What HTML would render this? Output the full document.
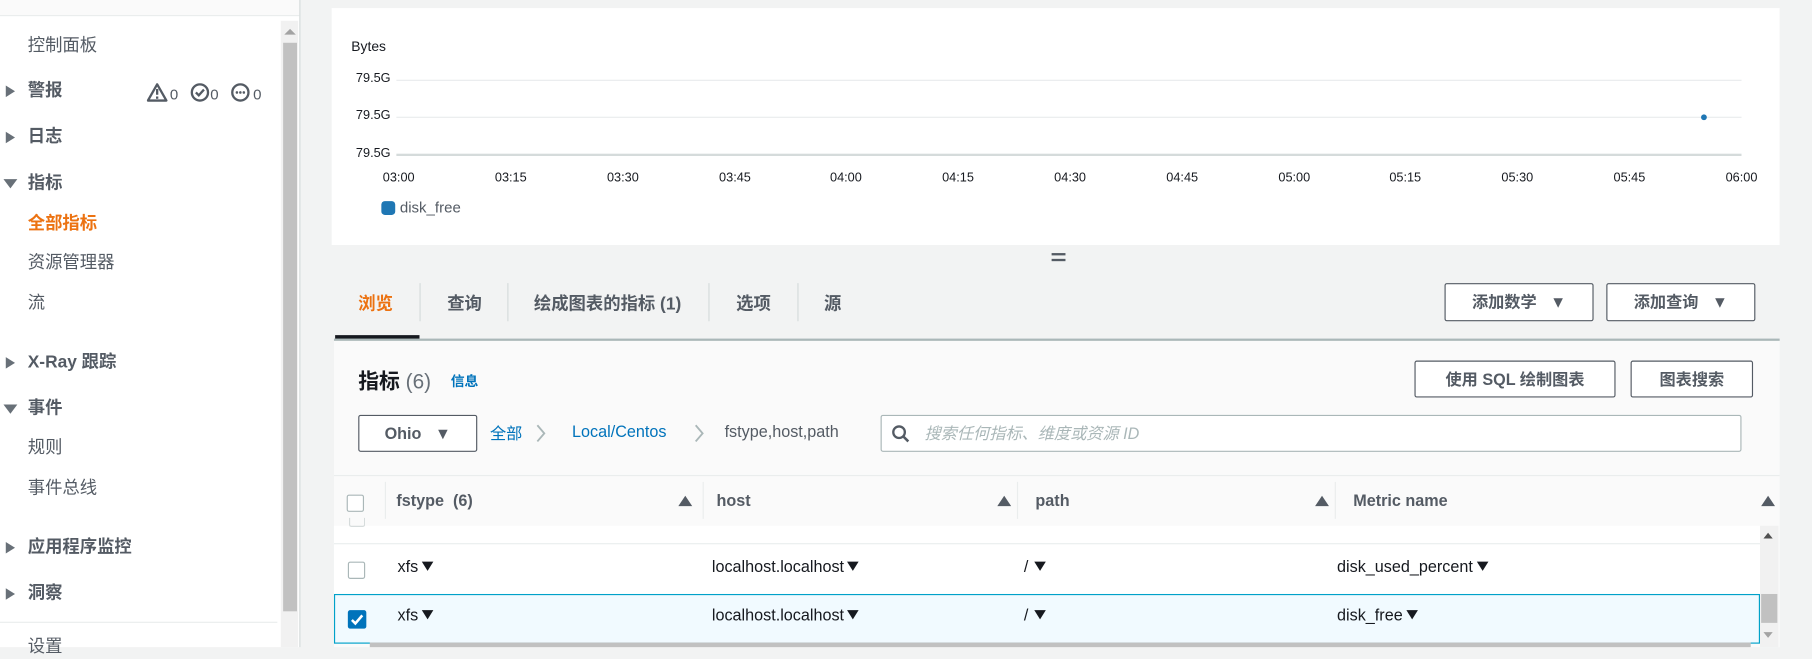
<!DOCTYPE html>
<html><head><meta charset="utf-8"><style>
*{margin:0;padding:0;box-sizing:border-box}
html,body{width:1812px;height:647px;overflow:hidden;background:#f2f3f3}
#w{position:absolute;left:0;top:0;width:1568px;height:560px;transform:scale(1.15561);transform-origin:0 0;font-family:"Liberation Sans","Noto Sans CJK SC",sans-serif;color:#16191f}
.a{position:absolute;white-space:nowrap}
.nav{font-size:15px;color:#545b64;line-height:20px}
.b{font-weight:bold}
.tri{position:absolute;width:0;height:0;border-top:5px solid transparent;border-bottom:5px solid transparent;border-left:8px solid #687078}
.trid{position:absolute;width:0;height:0;border-left:6px solid transparent;border-right:6px solid transparent;border-top:8px solid #687078}
.btn{position:absolute;background:#fff;border:1px solid #545b64;border-radius:2px;font-size:14px;font-weight:bold;color:#545b64;text-align:center}
.yl{position:absolute;font-size:11px;color:#16191f;left:308px}
.xl{position:absolute;font-size:11px;color:#16191f;top:148px;width:40px;margin-left:-20px;text-align:center}
.gl{position:absolute;left:343px;width:1164px;height:1px;background:#e9ebed}
.sep{position:absolute;width:1px;background:#d5dbdb}
.cb{position:absolute;width:15px;height:15px;border:1px solid #aab7b8;border-radius:2px;background:#fff}
.th{position:absolute;font-size:14px;font-weight:bold;color:#545b64;top:425px}
.up{position:absolute;width:0;height:0;border-left:6px solid transparent;border-right:6px solid transparent;border-bottom:9px solid #545b64;top:429px}
.td{position:absolute;font-size:14px;color:#16191f}
.dd{display:inline-block;width:0;height:0;border-left:5px solid transparent;border-right:5px solid transparent;border-top:8px solid #16191f;margin-left:3px;vertical-align:1px}
</style></head><body><div id="w">
<!-- sidebar -->
<div class="a" style="left:0;top:0;width:259px;height:560px;background:#fff"></div>
<div class="a" style="left:0;top:0;width:259px;height:14px;background:#fafafa;border-bottom:1px solid #eaeded"></div>
<div class="a" style="left:259px;top:0;width:1px;height:560px;background:#d5dbdb"></div>
<div class="a" style="left:243px;top:18px;width:15px;height:542px;background:#f1f1f1"></div>
<div class="a" style="left:245px;top:37px;width:12px;height:492px;background:#c1c1c1"></div>
<div class="a" style="left:246px;top:25px;width:0;height:0;border-left:5px solid transparent;border-right:5px solid transparent;border-bottom:5px solid #a3a3a3"></div>
<div class="a nav" style="left:24px;top:30px">控制面板</div>
<div class="tri" style="left:5px;top:74px"></div><div class="a nav b" style="left:24px;top:69px">警报</div>
<svg class="a" style="left:127px;top:71px" width="104" height="18" viewBox="0 0 104 18">
<path d="M9 2 L17 16 L1 16 Z" fill="none" stroke="#545b64" stroke-width="2" stroke-linejoin="round"/><rect x="8" y="6" width="2" height="5" fill="#545b64"/><rect x="8" y="12.5" width="2" height="2" fill="#545b64"/>
<text x="20" y="15" font-size="13" fill="#545b64" font-family="Liberation Sans">0</text>
<circle cx="46" cy="9" r="7" fill="none" stroke="#545b64" stroke-width="2"/><path d="M42.5 9 L45 11.5 L49.5 6.5" fill="none" stroke="#545b64" stroke-width="2"/>
<text x="55" y="15" font-size="13" fill="#545b64" font-family="Liberation Sans">0</text>
<circle cx="81" cy="9" r="7" fill="none" stroke="#545b64" stroke-width="2"/><circle cx="78" cy="9" r="1.1" fill="#545b64"/><circle cx="81" cy="9" r="1.1" fill="#545b64"/><circle cx="84" cy="9" r="1.1" fill="#545b64"/>
<text x="92" y="15" font-size="13" fill="#545b64" font-family="Liberation Sans">0</text></svg>
<div class="tri" style="left:5px;top:114px"></div><div class="a nav b" style="left:24px;top:109px">日志</div>
<div class="trid" style="left:3px;top:155px"></div><div class="a nav b" style="left:24px;top:149px">指标</div>
<div class="a nav b" style="left:24px;top:184px;color:#ec7211">全部指标</div>
<div class="a nav" style="left:24px;top:218px">资源管理器</div>
<div class="a nav" style="left:24px;top:253px">流</div>
<div class="tri" style="left:5px;top:309px"></div><div class="a nav b" style="left:24px;top:304px">X-Ray 跟踪</div>
<div class="trid" style="left:3px;top:350px"></div><div class="a nav b" style="left:24px;top:344px">事件</div>
<div class="a nav" style="left:24px;top:378px">规则</div>
<div class="a nav" style="left:24px;top:413px">事件总线</div>
<div class="tri" style="left:5px;top:469px"></div><div class="a nav b" style="left:24px;top:464px">应用程序监控</div>
<div class="tri" style="left:5px;top:509px"></div><div class="a nav b" style="left:24px;top:504px">洞察</div>
<div class="a" style="left:0;top:538px;width:240px;height:1px;background:#eaeded"></div>
<div class="a nav" style="left:24px;top:550px">设置</div>
<!-- chart card -->
<div class="a" style="left:287px;top:7px;width:1253px;height:205px;background:#fff"></div>
<div class="a" style="left:304px;top:33px;font-size:12px">Bytes</div>
<div class="gl" style="top:69px"></div><div class="gl" style="top:101px"></div>
<div class="a" style="left:343px;top:133px;width:1164px;height:2px;background:#d5dbdb"></div>
<div class="yl" style="top:62px">79.5G</div><div class="yl" style="top:94px">79.5G</div><div class="yl" style="top:127px">79.5G</div>
<div class="a" style="left:1472px;top:99px;width:5px;height:5px;border-radius:50%;background:#1f77b4"></div>
<div class="xl" style="left:345px">03:00</div><div class="xl" style="left:442px">03:15</div><div class="xl" style="left:539px">03:30</div><div class="xl" style="left:636px">03:45</div><div class="xl" style="left:732px">04:00</div><div class="xl" style="left:829px">04:15</div><div class="xl" style="left:926px">04:30</div><div class="xl" style="left:1023px">04:45</div><div class="xl" style="left:1120px">05:00</div><div class="xl" style="left:1216px">05:15</div><div class="xl" style="left:1313px">05:30</div><div class="xl" style="left:1410px">05:45</div><div class="xl" style="left:1507px">06:00</div>
<div class="a" style="left:330px;top:174px;width:12px;height:12px;border-radius:3px;background:#1f77b4"></div>
<div class="a" style="left:346px;top:172px;font-size:13px;color:#545b64">disk_free</div>
<div class="a" style="left:910px;top:219px;width:12px;height:2px;background:#545b64"></div>
<div class="a" style="left:910px;top:224px;width:12px;height:2px;background:#545b64"></div>
<!-- tabs -->
<div class="a" style="left:310px;top:252px;font-size:15px;font-weight:bold;color:#ec7211">浏览</div>
<div class="sep" style="left:363px;top:245px;height:33px"></div>
<div class="a" style="left:387px;top:252px;font-size:15px;font-weight:bold;color:#545b64">查询</div>
<div class="sep" style="left:439px;top:245px;height:33px"></div>
<div class="a" style="left:462px;top:252px;font-size:15px;font-weight:bold;color:#545b64">绘成图表的指标 (1)</div>
<div class="sep" style="left:613px;top:245px;height:33px"></div>
<div class="a" style="left:637px;top:252px;font-size:15px;font-weight:bold;color:#545b64">选项</div>
<div class="sep" style="left:690px;top:245px;height:33px"></div>
<div class="a" style="left:713px;top:252px;font-size:15px;font-weight:bold;color:#545b64">源</div>
<div class="btn" style="left:1250px;top:245px;width:129px;height:33px;line-height:31px">添加数学&nbsp;&nbsp;&nbsp;▼</div>
<div class="btn" style="left:1390px;top:245px;width:129px;height:33px;line-height:31px">添加查询&nbsp;&nbsp;&nbsp;▼</div>
<div class="a" style="left:289px;top:293px;width:1251px;height:2px;background:#aab7b8"></div>
<div class="a" style="left:290px;top:290px;width:73px;height:3px;background:#16191f"></div>
<!-- panel -->
<div class="a" style="left:289px;top:295px;width:1251px;height:265px;background:#fafafa"></div>
<div class="a" style="left:310px;top:316px;font-size:18px;font-weight:bold">指标 <span style="font-weight:normal;color:#687078">(6)</span></div>
<div class="a" style="left:390px;top:321px;font-size:12px;font-weight:bold;color:#0073bb">信息</div>
<div class="btn" style="left:1224px;top:312px;width:174px;height:32px;line-height:30px">使用 SQL 绘制图表</div>
<div class="btn" style="left:1411px;top:312px;width:106px;height:32px;line-height:30px">图表搜索</div>
<div class="btn" style="left:310px;top:359px;width:103px;height:32px;line-height:30px">Ohio&nbsp;&nbsp;&nbsp;▼</div>
<div class="a" style="left:424px;top:365px;font-size:14px;color:#0073bb">全部</div>
<svg class="a" style="left:463px;top:366px" width="10" height="18" viewBox="0 0 10 18"><path d="M2 2 L8 9 L2 16" fill="none" stroke="#aab7b8" stroke-width="1.6"/></svg>
<div class="a" style="left:495px;top:365px;font-size:14px;color:#0073bb">Local/Centos</div>
<svg class="a" style="left:600px;top:366px" width="10" height="18" viewBox="0 0 10 18"><path d="M2 2 L8 9 L2 16" fill="none" stroke="#aab7b8" stroke-width="1.6"/></svg>
<div class="a" style="left:627px;top:365px;font-size:14px;color:#545b64">fstype,host,path</div>
<div class="a" style="left:762px;top:359px;width:745px;height:32px;background:#fff;border:1px solid #aab7b8;border-radius:2px"></div>
<svg class="a" style="left:771px;top:367px" width="18" height="18" viewBox="0 0 18 18"><circle cx="7" cy="7" r="5" fill="none" stroke="#545b64" stroke-width="2"/><path d="M10.5 10.5 L15 15" stroke="#545b64" stroke-width="2.2"/></svg>
<div class="a" style="left:800px;top:365px;font-size:14px;font-style:italic;color:#aab7b8">搜索任何指标、维度或资源 ID</div>
<!-- table -->
<div class="a" style="left:289px;top:411px;width:1251px;height:1px;background:#eaeded"></div>
<div class="cb" style="left:300px;top:428px"></div>
<div class="sep" style="left:333px;top:417px;height:32px;background:#eaeded"></div>
<div class="sep" style="left:608px;top:417px;height:32px;background:#eaeded"></div>
<div class="sep" style="left:880px;top:417px;height:32px;background:#eaeded"></div>
<div class="sep" style="left:1155px;top:417px;height:32px;background:#eaeded"></div>
<div class="th" style="left:343px">fstype&nbsp; (6)</div><div class="up" style="left:587px"></div>
<div class="th" style="left:620px">host</div><div class="up" style="left:863px"></div>
<div class="th" style="left:896px">path</div><div class="up" style="left:1138px"></div>
<div class="th" style="left:1171px">Metric name</div><div class="up" style="left:1524px"></div>
<div class="a" style="left:289px;top:455px;width:1234px;height:102px;background:#fff"></div>
<div class="a" style="left:302px;top:448px;width:14px;height:8px;border:1px solid #d5dbdb;border-top:none;border-radius:0 0 2px 2px"></div>
<div class="a" style="left:289px;top:470px;width:1234px;height:1px;background:#eaeded"></div>
<div class="cb" style="left:301px;top:486px"></div>
<div class="td" style="left:344px;top:482px">xfs<span class="dd"></span></div>
<div class="td" style="left:616px;top:482px">localhost.localhost<span class="dd"></span></div>
<div class="td" style="left:886px;top:482px">/<span class="dd" style="margin-left:5px"></span></div>
<div class="td" style="left:1157px;top:482px">disk_used_percent<span class="dd"></span></div>
<div class="a" style="left:289px;top:514px;width:1234px;height:43px;background:#f1faff;border:1px solid #00a1c9"></div>
<div class="a" style="left:301px;top:528px;width:16px;height:16px;border-radius:2px;background:#0073bb"></div>
<svg class="a" style="left:301px;top:528px" width="16" height="16" viewBox="0 0 16 16"><path d="M3.5 8.5 L6.5 11.5 L12.5 4.5" fill="none" stroke="#fff" stroke-width="2.2"/></svg>
<div class="td" style="left:344px;top:524px">xfs<span class="dd"></span></div>
<div class="td" style="left:616px;top:524px">localhost.localhost<span class="dd"></span></div>
<div class="td" style="left:886px;top:524px">/<span class="dd" style="margin-left:5px"></span></div>
<div class="td" style="left:1157px;top:524px">disk_free<span class="dd"></span></div>
<div class="a" style="left:1523px;top:455px;width:16px;height:105px;background:#f1f1f1"></div>
<div class="a" style="left:1526px;top:461px;width:0;height:0;border-left:4px solid transparent;border-right:4px solid transparent;border-bottom:5px solid #505050"></div>
<div class="a" style="left:1524px;top:514px;width:14px;height:25px;background:#c1c1c1"></div>
<div class="a" style="left:1526px;top:547px;width:0;height:0;border-left:4px solid transparent;border-right:4px solid transparent;border-top:5px solid #a3a3a3"></div>
<div class="a" style="left:320px;top:556px;width:1195px;height:4px;background:#c1c1c1"></div>
</div></body></html>
